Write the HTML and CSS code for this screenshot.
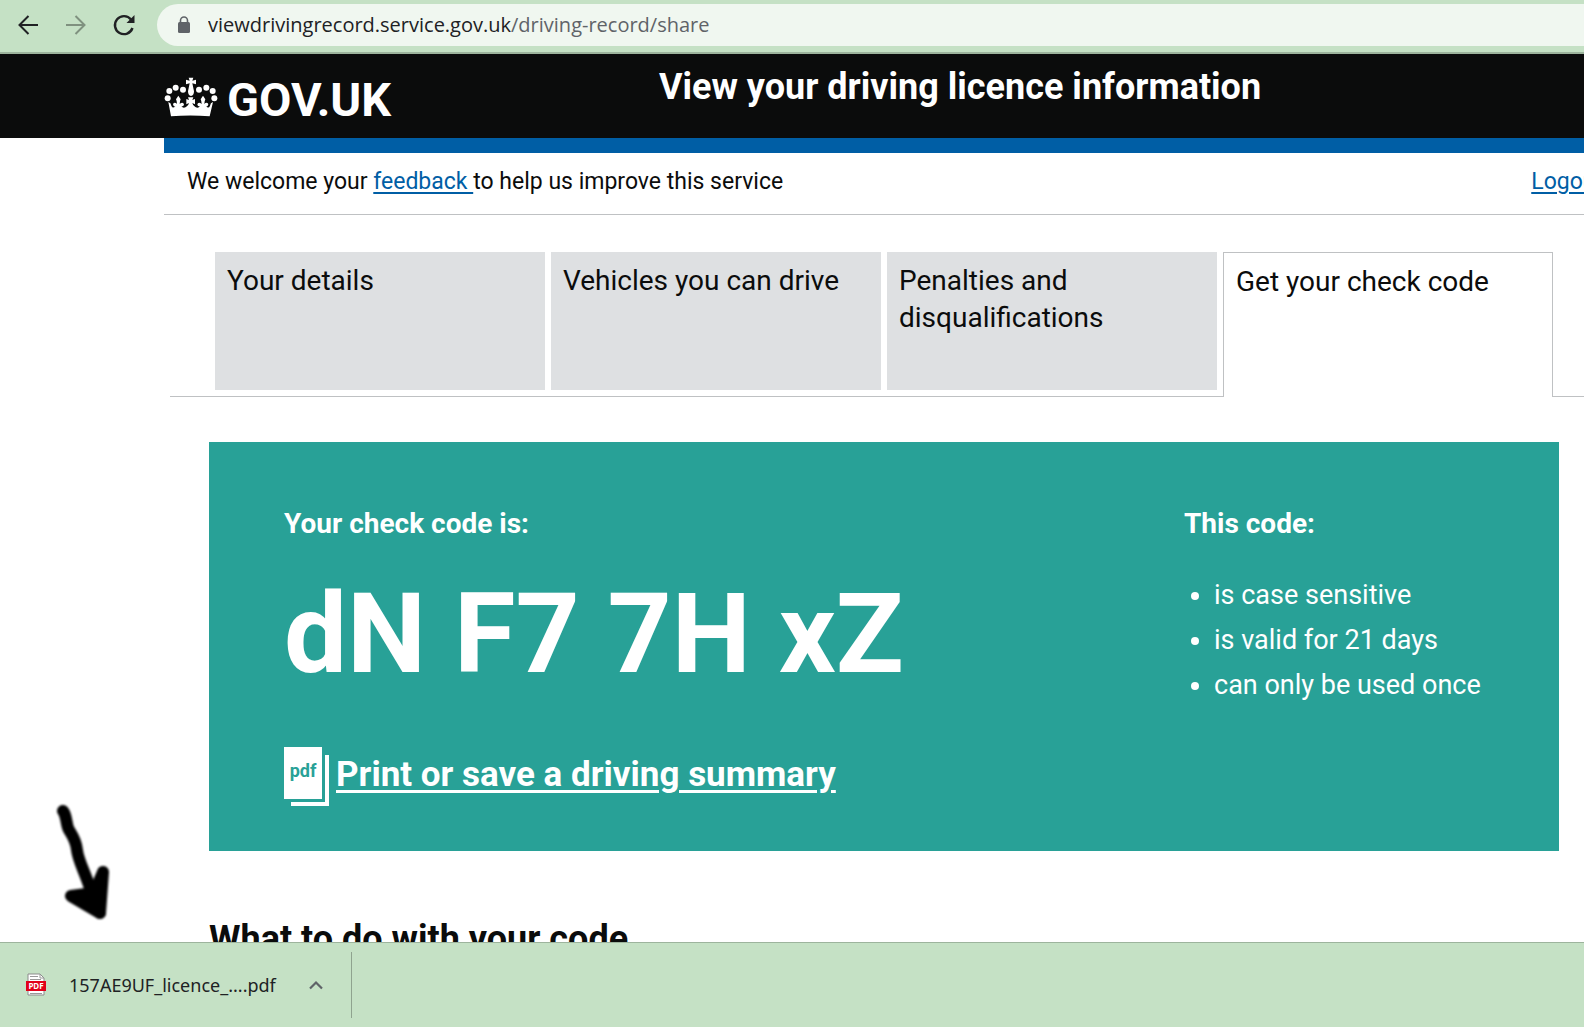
FILE: index.html
```html
<!DOCTYPE html>
<html lang="en">
<head>
<meta charset="utf-8">
<title>View your driving licence information</title>
<link rel="stylesheet" href="styles.css">
</head>
<body>
<div class="toolbar">
  <button class="nav-button" type="button" aria-label="Back">
    <svg width="24" height="24" viewBox="0 0 24 24" fill="none" stroke="currentColor" stroke-width="2"><path d="M22 12H4M12.500 3L3.500 12l9 9"/></svg>
  </button>
  <button class="nav-button nav-button-muted" type="button" aria-label="Forward">
    <svg width="24" height="24" viewBox="0 0 24 24" fill="none" stroke="currentColor" stroke-width="2"><path d="M2 12h18M11.500 3l9 9-9 9"/></svg>
  </button>
  <button class="nav-button" type="button" aria-label="Reload">
    <svg width="24" height="24" viewBox="0 0 24 24" fill="none" stroke="currentColor" stroke-width="2.400"><path d="M20.500 15A9 9 0 1 1 19 6.500"/><path d="M22.500 2v8h-8z" fill="currentColor" stroke="none"/></svg>
  </button>
  <div class="address">
    <svg class="lock" width="14" height="18" viewBox="0 0 14 18"><rect x="1" y="6" width="12" height="11" rx="1.500" fill="#5f6368"/><path d="M3.500 7V4.500a3.500 3.500 0 0 1 7 0V7" fill="none" stroke="#5f6368" stroke-width="1.600"/></svg>
    <input class="address-host" type="text" aria-label="Address" value="viewdrivingrecord.service.gov.uk">
    <input class="address-path" type="text" aria-label="Path" value="/driving-record/share">
  </div>
</div>

<div class="page">
  <header class="header">
    <div class="header-inner">
      <a class="logo" href="#">
        <svg class="crown" width="54" height="40" viewBox="72 50 162 120" fill="#fff">
          <circle cx="83" cy="114" r="9"/><circle cx="88" cy="92" r="9"/><circle cx="107" cy="82" r="9"/><circle cx="129" cy="88" r="9"/>
          <circle cx="223" cy="114" r="9"/><circle cx="218" cy="92" r="9"/><circle cx="199" cy="82" r="9"/><circle cx="177" cy="88" r="9"/>
          <path d="M146 52h14l-3 9 11-3v14l-11-3 5 24q0 12-9 14-9-2-9-14l5-24-11 3V58l11 3z"/>
          <path d="M85 125q8 2 9 11 4 10 12 2-6 2-7-6 1-7 9-4l3 3q0-8-3-14l7-11 7 11q-3 6-3 14l4-3q7-3 9 4-1 8-8 5 5 9 14 3 8-5 9-12l-8 4v-16l8 3-3-8h16l-3 8 8-3v16l-8-4q1 7 9 12 9 6 14-3-7 3-8-5 2-7 9-4l4 3q0-8-3-14l7-11 7 11q-3 6-3 14l3-3q8-3 9 4-1 8-7 6 8 8 12-2 1-9 9-11l-10 43q-58-5-116 0z"/>
        </svg>
        <span>GOV.UK</span>
      </a>
      <a class="service-name" href="#">View your driving licence information</a>
    </div>
  </header>

  <div class="phase">
    <p>We welcome your <a class="link" href="#">feedback </a>to help us improve this service</p>
    <a class="link" href="#">Logout</a>
  </div>

  <nav class="tabs" aria-label="Driving record">
    <a class="tab" href="#">Your details</a>
    <a class="tab" href="#">Vehicles you can drive</a>
    <a class="tab" href="#">Penalties and disqualifications</a>
    <a class="tab tab-selected" href="#" aria-current="page">Get your check code</a>
  </nav>

  <main class="main">
    <section class="panel">
      <div>
        <h2 class="panel-title">Your check code is:</h2>
        <p class="code">dN F7 7H xZ</p>
        <a class="summary" href="#">
          <svg width="46" height="60" viewBox="0 0 46 60"><path d="M41 8h4v51H7v-4h34z" fill="#fff"/><path d="M0 0h38v52H0z" fill="#fff"/><text class="pdf-label" x="19" y="30" text-anchor="middle">pdf</text></svg>
          <span>Print or save a driving summary</span>
        </a>
      </div>
      <div>
        <h2 class="panel-title">This code:</h2>
        <ul class="facts">
          <li>is case sensitive</li>
          <li>is valid for 21 days</li>
          <li>can only be used once</li>
        </ul>
      </div>
    </section>
    <h1 class="heading">What to do with your code</h1>
  </main>

  <svg class="pointer" width="70" height="130" viewBox="46 796 70 130" fill="none" stroke="#000" stroke-linecap="round" stroke-linejoin="round">
    <path stroke-width="12" d="M63 811C67 816 66 825 69 830S76 840 77 850S84 870 90 888L100 913"/>
    <path stroke-width="12" d="M71 896L100 913L103 872L94 893z" fill="#000"/>
  </svg>
</div>

<div class="downloads">
  <div class="download">
    <button class="download-file" type="button">
      <svg width="20" height="24" viewBox="0 0 20 24"><path d="M2 1h12l4 4v17H2z" fill="#fff" stroke="#8b8b8b"/><path d="M14 1v4h4M4 3.500h8M4 6.500h11" fill="none" stroke="#9a9a9a"/><path d="M4 20.500h12" stroke="#9a9a9a"/><path d="M0 8h20v10H0z" fill="#e2001a"/><text class="file-label" x="10" y="16" text-anchor="middle">PDF</text></svg>
      <span>157AE9UF_licence_....pdf</span>
    </button>
    <button class="download-more" type="button" aria-label="More options">
      <svg width="16" height="10" viewBox="0 0 16 10" fill="none" stroke="#5f6368" stroke-width="2.200"><path d="M2 8.500l6-6 6 6"/></svg>
    </button>
  </div>
</div>
</body>
</html>
```
FILE: styles.css
```css
* { box-sizing: border-box; }

body {
  display: flex;
  flex-direction: column;
  height: 100vh;
  margin: 0;
  overflow: hidden;
  background: #fff;
  color: #0b0c0c;
  font-family: Roboto, "Liberation Sans", sans-serif;
}

h1, h2, p, ul { margin: 0; padding: 0; }

button {
  padding: 0;
  border: 0;
  background: none;
  color: inherit;
  font: inherit;
}

/* Browser toolbar */
.toolbar {
  display: flex;
  flex: none;
  align-items: center;
  gap: 24px;
  height: 54px;
  padding: 0 0 2px 16px;
  border-bottom: 2px solid #9db49d;
  background: #c5e1c5;
  color: #202124;
}

.nav-button { display: flex; }
.nav-button-muted { color: #7f917f; }

.address {
  display: flex;
  flex: 1;
  align-items: center;
  height: 42px;
  margin-left: -3px;
  padding-left: 20px;
  border-radius: 21px 0 0 21px;
  background: #f0f7f0;
}

.lock { flex: none; margin-right: 17px; }

.address input {
  padding: 0;
  border: 0;
  outline: 0;
  background: none;
  font: 20px/32px "Open Sans", "Noto Sans", sans-serif;
}

.address-host { field-sizing: content; color: #202124; }
.address-path { flex: 1; color: #5f6368; }

/* Page */
.page {
  position: relative;
  flex: 1;
  min-height: 0;
  overflow: hidden;
}

.header { padding-left: 164px; background: #0b0c0c; }

.header-inner {
  display: grid;
  grid-template-columns: 495px 1fr;
  height: 84px;
  color: #fff;
  font-weight: 700;
}

.header a { color: inherit; text-decoration: none; }

.logo {
  display: flex;
  align-items: center;
  gap: 9px;
  padding-top: 6px;
  font-size: 47px;
}

.crown { margin-bottom: 4px; }

.service-name { padding-top: 12px; font-size: 36px; line-height: 42px; }

.phase {
  display: flex;
  justify-content: space-between;
  margin: 0 -42px 0 164px;
  padding: 12px 23px 15px;
  border-top: 15px solid #005ea5;
  border-bottom: 1px solid #bfc1c3;
  font-size: 23px;
  line-height: 34px;
}

.link {
  color: #005ea5;
  text-decoration-thickness: 2px;
  text-underline-offset: 3px;
}

.tabs {
  display: grid;
  grid-template-columns: repeat(4, 1fr);
  gap: 6px;
  margin: 37px 0 0 170px;
  padding: 0 31px 0 45px;
  border-bottom: 1px solid #bfc1c3;
}

.tab {
  height: 138px;
  margin-bottom: 6px;
  padding: 10px 12px;
  background: #dee0e2;
  color: #0b0c0c;
  font-size: 28px;
  line-height: 37px;
  text-decoration: none;
}

.tab-selected {
  height: 145px;
  margin-bottom: -1px;
  border: 1px solid #bfc1c3;
  border-bottom: 0;
  background: #fff;
}

.main { padding: 45px 25px 0 209px; }

.panel {
  display: grid;
  grid-template-columns: 2fr 1fr;
  padding: 62px 0 44px 75px;
  background: #28a197;
  color: #fff;
}

.panel > div + div { padding-left: 50px; }
.panel-title { font-size: 28px; line-height: 40px; }

.code {
  padding: 19px 0 42px;
  font-size: 112px;
  font-weight: 700;
  line-height: 142px;
}

.summary {
  display: flex;
  align-items: center;
  gap: 6px;
  color: inherit;
  font-size: 35px;
  font-weight: 700;
  line-height: 50px;
  text-decoration: none;
}

.summary span {
  padding-bottom: 5px;
  text-decoration: underline;
  text-decoration-thickness: 3px;
  text-underline-offset: 4px;
}

.pdf-label { fill: #28a197; font-size: 18px; font-weight: 700; }

.facts {
  padding: 29px 0 0 30px;
  font-size: 27px;
  line-height: 45px;
}

.heading { padding-top: 66px; font-size: 36px; line-height: 44px; white-space: nowrap; }

/* Hand-drawn arrow that lies over the page margin */
.pointer {
  position: absolute;
  bottom: 16px;
  left: 46px;
  filter: blur(1px);
}

/* Downloads shelf */
.downloads {
  flex: none;
  height: 85px;
  padding: 9px 0;
  border-top: 1px solid #9db49d;
  background: #c5e1c5;
}

.download {
  display: inline-flex;
  align-items: center;
  gap: 32px;
  height: 66px;
  padding: 0 27px 0 26px;
  border-right: 1px solid #8fa38f;
  color: #202124;
  font: 18px "Noto Sans", sans-serif;
}

.download-file { display: flex; align-items: center; gap: 23px; }
.download-more { display: flex; }
.file-label { fill: #fff; font-size: 8px; font-weight: 700; }
```
